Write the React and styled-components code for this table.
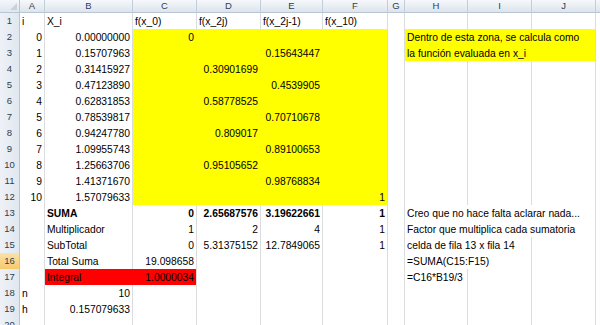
import React from 'react'
import styled, { createGlobalStyle } from 'styled-components'

const GlobalStyle = createGlobalStyle`
    html, body {
        margin: 0;
        padding: 0;
        background: #ffffff;
        overflow: hidden;
    }
`

const COLS = ['A', 'B', 'C', 'D', 'E', 'F', 'G', 'H', 'I', 'J', 'K']
const TEMPLATE = '20px 25px 88px 64px 64px 62px 65px 17px 63px 64px 64px 64px'

const YELLOW = '#ffff00'
const RED = '#ff0000'

// cell values per row: [value, align, bold]
const DATA = {
    1: { A: ['i', 'left'], B: ['X_i', 'left'], C: ['f(x_0)', 'left'], D: ['f(x_2j)', 'left'], E: ['f(x_2j-1)', 'left'], F: ['f(x_10)', 'left'] },
    2: { A: ['0'], B: ['0.00000000'], C: ['0'], H: ['Dentro de esta zona, se calcula como', 'left'] },
    3: { A: ['1'], B: ['0.15707963'], E: ['0.15643447'], H: ['la función evaluada en x_i', 'left'] },
    4: { A: ['2'], B: ['0.31415927'], D: ['0.30901699'] },
    5: { A: ['3'], B: ['0.47123890'], E: ['0.4539905'] },
    6: { A: ['4'], B: ['0.62831853'], D: ['0.58778525'] },
    7: { A: ['5'], B: ['0.78539817'], E: ['0.70710678'] },
    8: { A: ['6'], B: ['0.94247780'], D: ['0.809017'] },
    9: { A: ['7'], B: ['1.09955743'], E: ['0.89100653'] },
    10: { A: ['8'], B: ['1.25663706'], D: ['0.95105652'] },
    11: { A: ['9'], B: ['1.41371670'], E: ['0.98768834'] },
    12: { A: ['10'], B: ['1.57079633'], F: ['1'] },
    13: {
        B: ['SUMA', 'left', true], C: ['0', 'right', true], D: ['2.65687576', 'right', true],
        E: ['3.19622661', 'right', true], F: ['1', 'right', true], H: ['Creo que no hace falta aclarar nada...', 'left'],
    },
    14: { B: ['Multiplicador', 'left'], C: ['1'], D: ['2'], E: ['4'], F: ['1'], H: ['Factor que multiplica cada sumatoria', 'left'] },
    15: { B: ['SubTotal', 'left'], C: ['0'], D: ['5.31375152'], E: ['12.7849065'], F: ['1'], H: ['celda de fila 13 x fila 14', 'left'] },
    16: { B: ['Total Suma', 'left'], C: ['19.098658'], H: ['=SUMA(C15:F15)', 'left'] },
    17: { B: ['Integral', 'left'], C: ['1.0000034'], H: ['=C16*B19/3', 'left'] },
    18: { A: ['n', 'left'], B: ['10'] },
    19: { A: ['h', 'left'], B: ['0.157079633'] },
    20: {},
}

// how many columns the text in H runs over
const H_SPAN = { 2: 3, 3: 3, 13: 3, 14: 3, 15: 2, 16: 2 }

const inRange = (c, a, b) => COLS.indexOf(c) >= COLS.indexOf(a) && COLS.indexOf(c) <= COLS.indexOf(b)

const fillOf = (r, c) => {
    if (r >= 2 && r <= 12 && inRange(c, 'C', 'F')) return YELLOW
    if (r >= 2 && r <= 3 && inRange(c, 'H', 'J')) return YELLOW
    if (r === 17 && inRange(c, 'B', 'C')) return RED
    return null
}

const App = () => {
    const rows = Object.keys(DATA).map(Number)

    return (
        <Sheet>
            <GlobalStyle />
            <Row>
                <Corner>
                    <CornerMark />
                </Corner>
                {COLS.map(c => <ColHead key={c}>{c}</ColHead>)}
            </Row>
            {rows.map(r => {
                const cells = []
                for (let i = 0; i < COLS.length; i++) {
                    const c = COLS[i]
                    const span = c === 'H' && H_SPAN[r] ? H_SPAN[r] : 1
                    const next = COLS[i + span]
                    const fill = fillOf(r, c)
                    const noRight = fill && next && fillOf(r, next) === fill
                    const noBottom = fill && fillOf(r + 1, c) === fill
                    const d = DATA[r][c]
                    cells.push(
                        <Cell
                            key={c}
                            $span={span}
                            $fill={fill}
                            $noRight={noRight}
                            $noBottom={noBottom}
                            $align={d ? d[1] || 'right' : 'right'}
                            $bold={d ? d[2] : false}
                        >
                            {d ? d[0] : ''}
                        </Cell>
                    )
                    i += span - 1
                }
                return (
                    <Row key={r}>
                        <RowHead $active={r === 16}>{r}</RowHead>
                        {cells}
                    </Row>
                )
            })}
        </Sheet>
    )
}

export default App

const Sheet = styled.div`
    width: 600px;
    height: 325px;
    overflow: hidden;
    font-family: "Liberation Sans", Arial, sans-serif;
    font-size: 10.3px;
    color: #000;
`

const Row = styled.div`
    display: grid;
    grid-template-columns: ${TEMPLATE};
    height: 16px;
    &:first-child {
        height: 13px;
    }
`

const Corner = styled.div`
    background: linear-gradient(#f4f7fb, #dfe6ee);
    border-right: 1px solid #b8c5d4;
    border-bottom: 1px solid #b8c5d4;
    box-sizing: border-box;
    position: relative;
`

const CornerMark = styled.div`
    position: absolute;
    right: 2px;
    bottom: 2px;
    width: 0;
    height: 0;
    border-left: 7px solid transparent;
    border-bottom: 7px solid #c9d1db;
`

const ColHead = styled.div`
    background: linear-gradient(#f6f8fb, #dde4ec);
    border-right: 1px solid #c3cedb;
    border-bottom: 1px solid #b8c5d4;
    box-sizing: border-box;
    color: #2f3d52;
    text-align: center;
    line-height: 12px;
    font-size: 9.5px;
`

const RowHead = styled.div`
    background: ${p => p.$active
        ? 'linear-gradient(#fbe2a8, #f6c96e)'
        : 'linear-gradient(90deg, #eef2f7, #e0e7ef)'};
    border-right: 1px solid #b8c5d4;
    border-bottom: 1px solid #c9d3de;
    box-sizing: border-box;
    color: #2f3d52;
    text-align: center;
    line-height: 16px;
    font-size: 9.5px;
`

const Cell = styled.div`
    grid-column: span ${p => p.$span};
    background: ${p => p.$fill || '#ffffff'};
    border-right: 1px solid ${p => (p.$noRight ? 'transparent' : '#dadcdd')};
    border-bottom: 1px solid ${p => (p.$noBottom ? 'transparent' : '#dadcdd')};
    box-sizing: border-box;
    padding: 1px 2px 0 2px;
    line-height: 15px;
    white-space: nowrap;
    overflow: hidden;
    text-align: ${p => p.$align};
    font-weight: ${p => (p.$bold ? 'bold' : 'normal')};
`
